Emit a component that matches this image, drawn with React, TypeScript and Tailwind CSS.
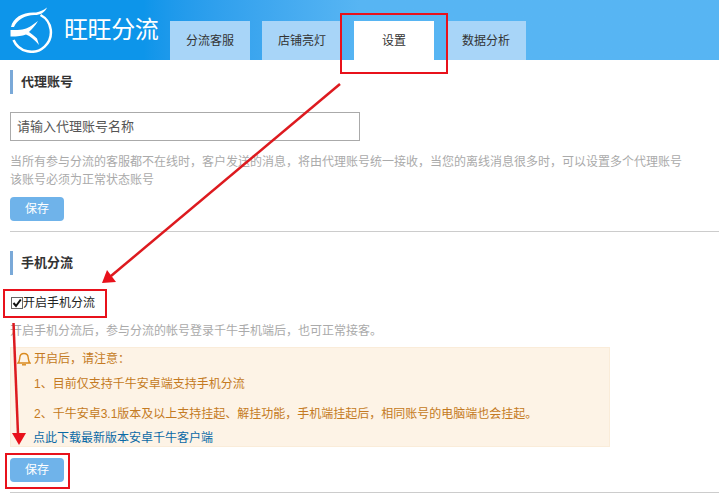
const C = "\uFF0C";
const COLON = "\uFF1A";

export default function App() {
  const font = { fontFamily: '"Liberation Sans", "Noto Sans CJK SC", sans-serif' };
  const tab = "w-20 h-[39px] flex items-center justify-center text-xs text-[#333]";
  const heading = "h-6 border-l-[3px] border-[#7aa9d8] pl-2 flex items-center text-[13px] font-bold text-[#333]";
  const save = "w-[54px] h-6 bg-[#6fb3ea] rounded-sm text-white text-xs flex items-center justify-center";
  return (
    <div style={font} className="relative w-[719px] h-[496px] overflow-hidden bg-white">
      <header className="h-[60px] flex items-end bg-gradient-to-r from-[#0d95ea] from-20% to-[#57b5f3] to-50%">
        <div className="w-[170px] h-[60px] flex items-center pl-2.5 gap-2 text-white self-start">
          <svg width="46" height="46" viewBox="10 7 46 46" fill="none" className="mt-[-1px]">
            <path d="M47 7.5 C43 10.5 40 11.5 36 12.5 C24 11.5 13 17 11 27 L14 27 C17 20 25 14.8 35 15 C40 15 45 12.5 47 7.5Z" fill="white" />
            <path d="M40.5 15 A19.5 19.5 0 1 1 13.5 40" stroke="white" strokeWidth="2.5" />
            <path d="M10.5 30 L10.5 36.5 C18 36.5 22 36 26 34.5 C30 36 35 40 39 45 L37 38.5 C34 35.5 31 33.5 29 32 C32 29 35 26 38 21 L31 26 C26 29 22 30.5 10.5 30Z" fill="white" />
          </svg>
          <span className="text-2xl leading-none whitespace-nowrap tracking-[-0.4px]">旺旺分流</span>
        </div>
        <nav className="flex gap-3">
          <div className={tab + " bg-[#a8d5f8]"}>分流客服</div>
          <div className={tab + " bg-[#a8d5f8]"}>店铺亮灯</div>
          <div className={tab + " bg-white"}>设置</div>
          <div className={tab + " bg-[#a8d5f8]"}>数据分析</div>
        </nav>
      </header>

      <main className="px-2.5 pt-2.5">
        <h2 className={heading}>代理账号</h2>
        <div className="mt-[18px] w-[350px] h-[29px] border border-[#aaa] flex items-center pl-1.5 text-[13px] text-[#555]">请输入代理账号名称</div>
        <p className="mt-[12px] text-xs leading-[18px] text-[#aaa] whitespace-nowrap">
          {`当所有参与分流的客服都不在线时${C}客户发送的消息${C}将由代理账号统一接收${C}当您的离线消息很多时${C}可以设置多个代理账号`}
          <br />
          该账号必须为正常状态账号
        </p>
        <button className={save + " mt-2"}>保存</button>
        <div className="mt-2.5 h-px bg-[#ccc] -mr-2.5"></div>

        <h2 className={heading + " mt-[19px]"}>手机分流</h2>
        <label className="mt-[21px] ml-px flex items-center text-xs text-[#222] h-3.5">
          <span className="w-3 h-3 border border-[#666] flex items-center justify-center bg-white">
            <svg width="10" height="10" viewBox="0 0 10 10" fill="none"><path d="M1.5 5 L4 8 L8.8 1.5" stroke="#111" strokeWidth="2" /></svg>
          </span>
          开启手机分流
        </label>
        <p className="mt-[12px] text-xs leading-[18px] text-[#aaa]">{`开启手机分流后${C}参与分流的帐号登录千牛手机端后${C}也可正常接客。`}</p>

        <section className="mt-[7px] w-[600px] h-[100px] bg-[#fdf3e6] border border-[#faecd9] text-xs text-[#c47a22]">
          <div className="flex items-center h-[22px] pl-1.5">
            <svg width="14" height="14" viewBox="0 0 14 14" fill="none" className="mr-[3px]">
              <path d="M1 11 C2.5 9.5 2.5 8 2.8 5.5 C3 3 5 1.5 7 1.5 C9 1.5 11 3 11.2 5.5 C11.5 8 11.5 9.5 13 11 Z" stroke="#d98a1f" strokeWidth="1.4" />
              <path d="M5 12.8 H9" stroke="#d98a1f" strokeWidth="1.4" />
            </svg>
            <span>{`开启后${C}请注意${COLON}`}</span>
          </div>
          <p className="pl-[23px] mt-[5px] leading-[18px]">1、目前仅支持千牛安卓端支持手机分流</p>
          <p className="pl-[23px] mt-3 leading-[18px]">{`2、千牛安卓3.1版本及以上支持挂起、解挂功能${C}手机端挂起后${C}相同账号的电脑端也会挂起。`}</p>
          <a className="block pl-[22px] mt-1.5 leading-[18px] text-[#0a69a5]">点此下载最新版本安卓千牛客户端</a>
        </section>
        <button className={save + " mt-[11px]"}>保存</button>
        <div className="mt-2.5 h-px bg-[#ccc] -mr-2.5"></div>
      </main>

      <div className="absolute left-[340px] top-[13px] w-[108px] h-[61px] border-2 border-[#e8111b]"></div>
      <div className="absolute left-[3px] top-[289px] w-[104px] h-[29px] border-2 border-[#e8111b]"></div>
      <div className="absolute left-[5px] top-[453px] w-[65px] h-[36px] border-2 border-[#e8111b]"></div>
      <svg className="absolute left-0 top-0 pointer-events-none" width="719" height="496" fill="none">
        <path d="M340 84 L111 276" stroke="#dd1a1f" strokeWidth="2.5" />
        <path d="M102 283 L107 270 L116 282 Z" fill="#e8111b" />
        <path d="M13.5 323 L18 434" stroke="#dd1a1f" strokeWidth="2.5" />
        <path d="M12 433 L26 433 L19 445 Z" fill="#e8111b" />
      </svg>
    </div>
  );
}
